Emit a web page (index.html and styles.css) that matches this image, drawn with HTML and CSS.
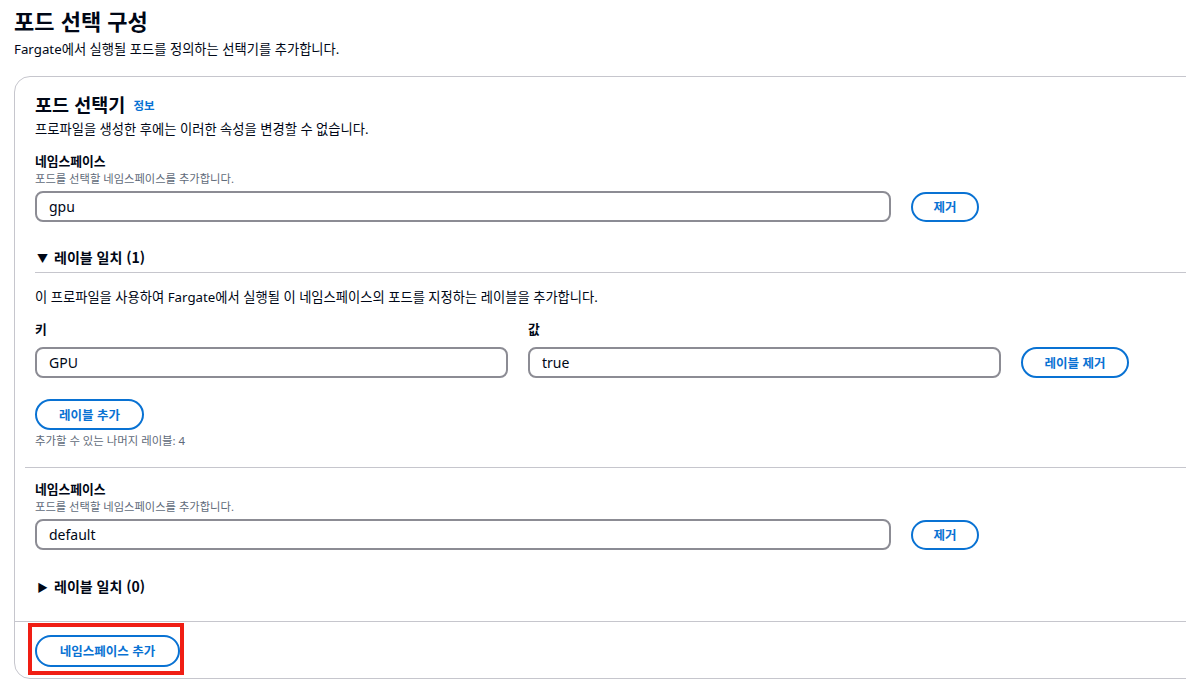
FILE: index.html
```html
<!DOCTYPE html>
<html lang="ko">
<head>
<meta charset="utf-8">
<link rel="stylesheet" href="styles.css">
</head>
<body>
<div class="page">
  <h1 class="page-title">포드 선택 구성</h1>
  <p class="page-desc">Fargate에서 실행될 포드를 정의하는 선택기를 추가합니다.</p>

  <section class="card">
    <div class="card-header">
      <h2 class="card-title">포드 선택기 <a class="info">정보</a></h2>
      <p class="card-desc">프로파일을 생성한 후에는 이러한 속성을 변경할 수 없습니다.</p>
    </div>

    <div class="card-body">
      <div class="ns-item">
        <div class="field-label">네임스페이스</div>
        <div class="field-desc">포드를 선택할 네임스페이스를 추가합니다.</div>
        <div class="ns-row">
          <div class="input ns-input">gpu</div>
          <button class="btn">제거</button>
        </div>

        <div class="expand-header open"><span class="caret">▼</span>레이블 일치 <span class="count">(1)</span></div>
        <div class="expand-content">
          <p class="expand-desc">이 프로파일을 사용하여 Fargate에서 실행될 이 네임스페이스의 포드를 지정하는 레이블을 추가합니다.</p>
          <div class="label-grid">
            <div class="kv">
              <div class="field-label">키</div>
              <div class="input">GPU</div>
            </div>
            <div class="kv">
              <div class="field-label">값</div>
              <div class="input">true</div>
            </div>
            <button class="btn">레이블 제거</button>
          </div>
          <button class="btn add-label">레이블 추가</button>
          <div class="hint">추가할 수 있는 나머지 레이블: 4</div>
        </div>
      </div>

      <div class="separator"></div>

      <div class="ns-item">
        <div class="field-label">네임스페이스</div>
        <div class="field-desc">포드를 선택할 네임스페이스를 추가합니다.</div>
        <div class="ns-row">
          <div class="input ns-input">default</div>
          <button class="btn">제거</button>
        </div>
        <div class="expand-header closed"><span class="caret">▶</span>레이블 일치 <span class="count">(0)</span></div>
      </div>
    </div>

    <div class="card-footer">
      <div class="highlight">
        <button class="btn">네임스페이스 추가</button>
      </div>
    </div>
  </section>
</div>
</body>
</html>
```

FILE: styles.css
```css
html, body {
  margin: 0;
  padding: 0;
  background: #ffffff;
  overflow: hidden;
}

body {
  font-family: "Noto Sans", "Noto Sans CJK KR", sans-serif;
  color: #000716;
}

.page {
  padding: 4px 0 0 14px;
}

.page-title {
  margin: 0;
  font-size: 22px;
  line-height: 32px;
  font-weight: 700;
  font-family: "Noto Sans CJK KR", sans-serif;
}

.page-desc {
  margin: 4px 0 0;
  font-size: 13.3px;
  line-height: 18px;
}

.card {
  margin-top: 18px;
  width: 1200px;
  border: 1px solid #c6c6cd;
  border-radius: 16px;
  background: #fff;
}

.card-header {
  padding: 15px 20px 0 20px;
}

.card-title {
  margin: 0;
  font-size: 18.5px;
  line-height: 24px;
  font-weight: 700;
  font-family: "Noto Sans CJK KR", sans-serif;
}

.info {
  font-size: 11.5px;
  font-weight: 700;
  color: #0972d3;
  margin-left: 3px;
  vertical-align: 2px;
}

.card-desc {
  margin: 3px 0 0;
  font-size: 13.3px;
  line-height: 18px;
}

.card-body {
  padding: 14px 0 0 20px;
}

.field-label {
  font-size: 12.8px;
  font-weight: 700;
  line-height: 18px;
  font-family: "Noto Sans CJK KR", sans-serif;
}

.field-desc {
  font-size: 11.3px;
  line-height: 16px;
  margin-top: 1px;
  color: #5f6b7a;
}

.ns-row {
  display: flex;
  align-items: center;
  gap: 20px;
  margin-top: 4px;
}

.input {
  box-sizing: border-box;
  height: 31px;
  border: 2px solid #8c8c94;
  border-radius: 8px;
  padding: 0 12px;
  font-size: 14px;
  line-height: 27px;
}

.ns-input {
  width: 856px;
}

.btn {
  box-sizing: border-box;
  height: 30px;
  padding: 0 18px;
  border: 2px solid #0972d3;
  border-radius: 20px;
  background: #fff;
  color: #0972d3;
  font-family: "Noto Sans CJK KR", sans-serif;
  font-size: 12.5px;
  font-weight: 700;
  line-height: 26px;
  cursor: pointer;
}

.ns-row .btn {
  width: 68px;
  padding: 0;
}

.expand-header {
  margin-top: 22px;
  font-size: 14px;
  font-weight: 700;
  line-height: 28px;
  font-family: "Noto Sans CJK KR", sans-serif;
  padding-left: 2px;
}

.expand-header .count {
  font-weight: 600;
}

.caret {
  font-size: 11px;
  display: inline-block;
  width: 17px;
}

.expand-header.open {
  border-bottom: 1px solid #c6c6cd;
  padding-bottom: 0;
  margin-bottom: 0;
  line-height: 27px;
}

.expand-header.closed {
  margin-top: 22px;
  margin-bottom: 20px;
}

.expand-content {
  padding-top: 15px;
}

.expand-desc {
  margin: 0;
  font-size: 13.3px;
  line-height: 18px;
}

.label-grid {
  display: grid;
  grid-template-columns: 473px 473px auto;
  column-gap: 20px;
  align-items: end;
  margin-top: 14px;
  justify-content: start;
}

.label-grid .field-label {
  margin-bottom: 9px;
}

.label-grid .btn {
  width: 108px;
  padding: 0;
  height: 31px;
}

.add-label {
  margin-top: 21px;
  width: 109px;
  padding: 0;
  height: 31px;
}

.hint {
  margin-top: 3px;
  font-size: 11.4px;
  line-height: 16px;
  color: #5f6b7a;
}

.separator {
  border-top: 1px solid #c6c6cd;
  margin: 18px 0 12px -10px;
}

.card-footer {
  border-top: 1px solid #c6c6cd;
  padding: 1px 0 3px 13px;
}

.highlight {
  box-sizing: border-box;
  width: 156px;
  border: 4px solid #f01e14;
  padding: 8px 0 4px 3px;
}

.highlight .btn {
  display: block;
  width: 145px;
  padding: 0;
  height: 32px;
}
```
